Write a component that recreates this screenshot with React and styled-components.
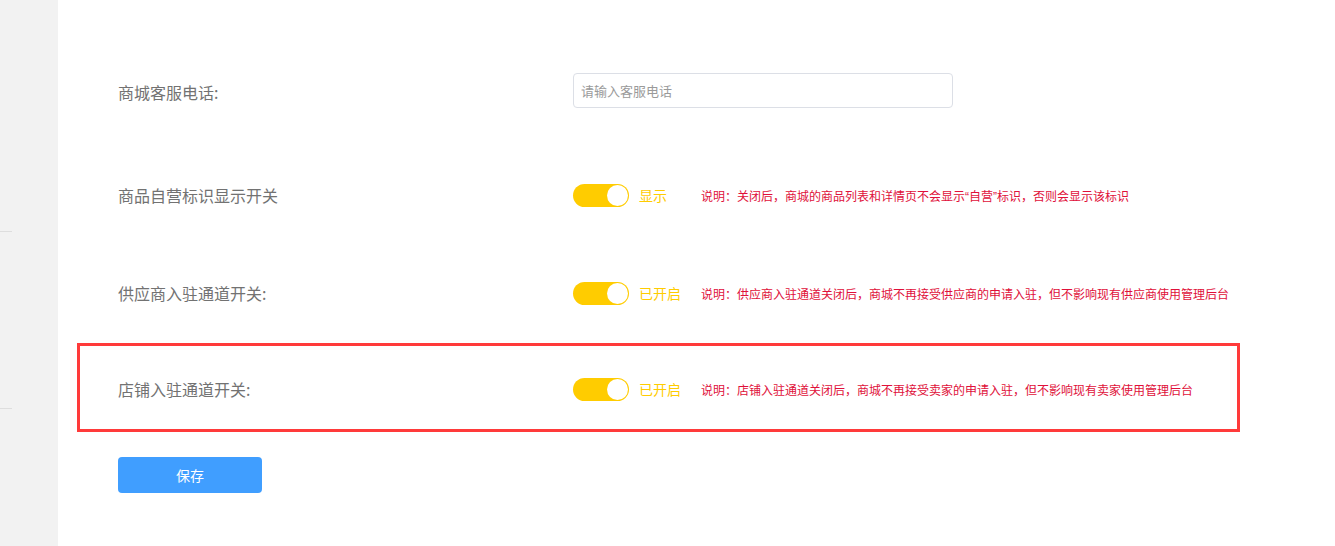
import React from 'react'
import styled, { createGlobalStyle } from 'styled-components'

const GlobalStyle = createGlobalStyle`
  html, body {
    margin: 0;
    padding: 0;
    background: #fff;
    font-family: "Noto Sans CJK SC", "Noto Sans", sans-serif;
  }
`

const Page = styled.div`
  display: flex;
  height: 546px;
  overflow: hidden;
`

const Sidebar = styled.div`
  width: 58px;
  flex-shrink: 0;
  background: #f2f2f2;
  display: flex;
  flex-direction: column;
  padding-top: 231px;
  gap: 176px;
  box-sizing: border-box;
`

const SideRule = styled.div`
  width: 12px;
  height: 1px;
  background: #dedede;
`

const Main = styled.div`
  flex: 1;
  padding: 72px 0 0 60px;
`

const Row = styled.div`
  display: flex;
  align-items: center;
  height: 36px;
  margin-top: ${p => p.$top || 0}px;
`

const Label = styled.div`
  width: 455px;
  flex-shrink: 0;
  font-size: 16px;
  color: #727272;
  line-height: 1;
  padding-top: ${p => p.$shift || 0}px;
`

const Input = styled.input`
  width: 380px;
  height: 35px;
  box-sizing: border-box;
  border: 1px solid #dcdfe6;
  border-radius: 4px;
  padding: 0 7px;
  font-family: inherit;
  font-size: 13px;
  color: #606266;
  outline: none;

  &::placeholder {
    color: #9a9a9a;
  }
`

const Switch = styled.span`
  position: relative;
  display: inline-block;
  width: 56px;
  height: 23px;
  border-radius: 12px;
  background: #ffcc00;
  flex-shrink: 0;

  &::after {
    content: '';
    position: absolute;
    top: 1px;
    right: 1px;
    width: 21px;
    height: 21px;
    border-radius: 50%;
    background: #fff;
  }
`

const Status = styled.span`
  width: 52px;
  margin-left: 10px;
  flex-shrink: 0;
  font-size: 14px;
  color: #ffcc00;
`

const Note = styled.span`
  margin-left: 10px;
  font-family: "Liberation Sans", "Noto Sans CJK SC", sans-serif;
  font-size: 12px;
  color: #e0103a;
  white-space: nowrap;
`

const Highlight = styled.div`
  margin: 32px 0 0 -41px;
  width: 1163px;
  height: 89px;
  box-sizing: border-box;
  border: 3px solid #ff3a3a;
  padding: 25px 0 0 38px;
`

const SaveButton = styled.button`
  margin-top: 25px;
  width: 144px;
  height: 36px;
  border: none;
  border-radius: 4px;
  background: #409eff;
  color: #fff;
  font-family: inherit;
  font-size: 14px;
  cursor: pointer;
`

const SwitchRow = ({ label, status, note, top, shift }) => (
  <Row $top={top}>
    <Label $shift={shift}>{label}</Label>
    <Switch />
    <Status>{status}</Status>
    <Note>{note}</Note>
  </Row>
)

export default function App() {
  return (
    <Page>
      <GlobalStyle />
      <Sidebar>
        <SideRule />
        <SideRule />
      </Sidebar>
      <Main>
        <Row>
          <Label $shift={3}>商城客服电话:</Label>
          <Input placeholder="请输入客服电话" />
        </Row>
        <SwitchRow
          top={69}
          label="商品自营标识显示开关"
          status="显示"
          note="说明：关闭后，商城的商品列表和详情页不会显示“自营”标识，否则会显示该标识"
        />
        <SwitchRow
          top={62}
          label="供应商入驻通道开关:"
          status="已开启"
          note="说明：供应商入驻通道关闭后，商城不再接受供应商的申请入驻，但不影响现有供应商使用管理后台"
        />
        <Highlight>
          <SwitchRow
            label="店铺入驻通道开关:"
            status="已开启"
            note="说明：店铺入驻通道关闭后，商城不再接受卖家的申请入驻，但不影响现有卖家使用管理后台"
          />
        </Highlight>
        <SaveButton>保存</SaveButton>
      </Main>
    </Page>
  )
}
